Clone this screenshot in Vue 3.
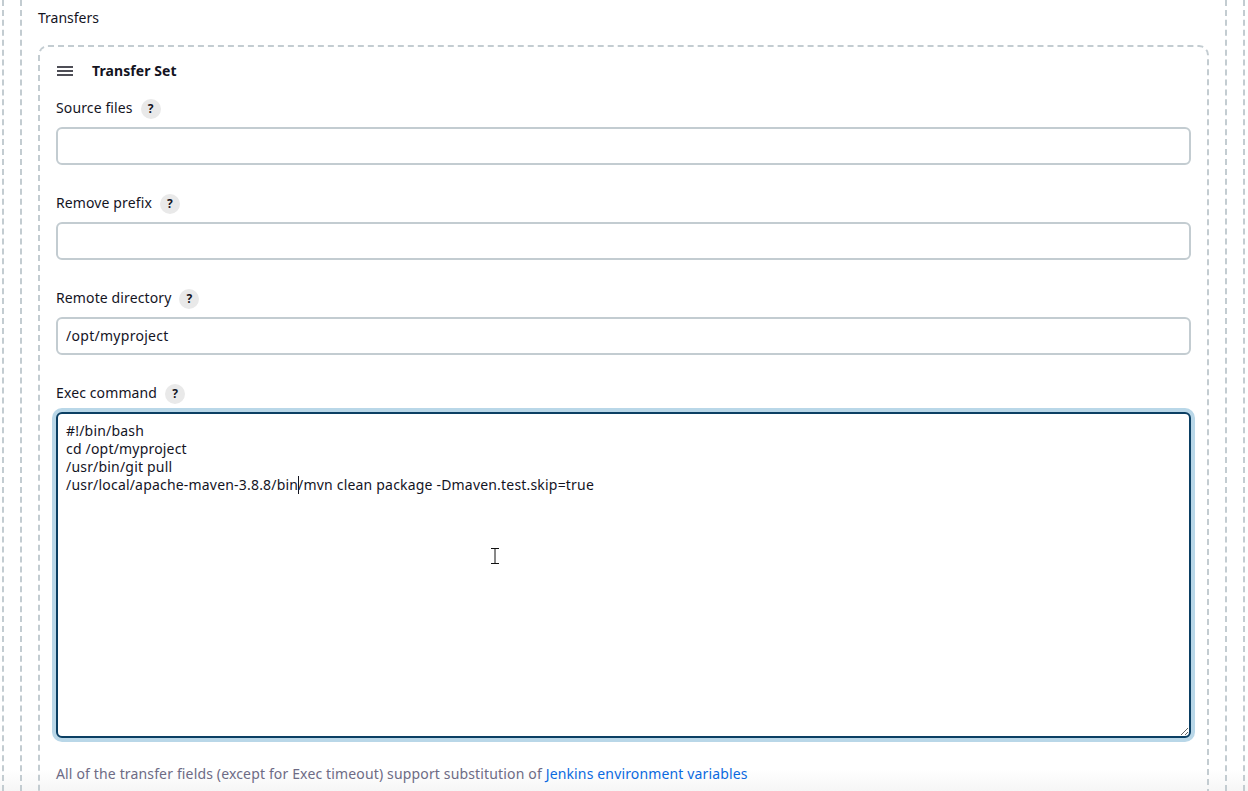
<script setup>
const command = `#!/bin/bash
cd /opt/myproject
/usr/bin/git pull
/usr/local/apache-maven-3.8.8/bin/mvn clean package -Dmaven.test.skip=true`
const fields = [
  { label: 'Source files', value: '' },
  { label: 'Remove prefix', value: '' },
  { label: 'Remote directory', value: '/opt/myproject' }
]
</script>

<template>
  <div class="page">
    <div class="rail rail-outer">
      <div class="rail rail-inner">
        <div class="section-label">Transfers</div>
        <div class="set">
          <div class="set-head">
            <svg class="handle" width="16" height="10" viewBox="0 0 16 10" aria-hidden="true">
              <path d="M0 1h16M0 5h16M0 9h16" stroke="#14141f" stroke-width="1.5" fill="none" />
            </svg>
            <span class="set-title">Transfer Set</span>
          </div>

          <div v-for="f in fields" :key="f.label" class="field">
            <div class="label-row">
              <span class="label">{{ f.label }}</span>
              <span class="help">?</span>
            </div>
            <input class="input" type="text" :value="f.value" />
          </div>

          <div class="field field-exec">
            <div class="label-row">
              <span class="label">Exec command</span>
              <span class="help">?</span>
            </div>
            <div class="editor">
              <textarea class="textarea" spellcheck="false" :value="command"></textarea>
              <span class="caret"></span>
              <svg class="ibeam" width="8" height="16" viewBox="0 0 8 16" aria-hidden="true">
                <path d="M0 .5h3M5 .5h3M3 .5h2M4 .5v15M0 15.5h8" stroke="#111" stroke-width="1" fill="none" />
              </svg>
            </div>
          </div>

          <p class="note">
            All of the transfer fields (except for Exec timeout) support substitution of
            <a class="link" href="#">Jenkins environment variables</a>
          </p>
        </div>
      </div>
    </div>
  </div>
</template>

<style>
html, body {
  margin: 0;
  height: 100%;
  overflow: hidden;
  background: #fff;
}
</style>

<style scoped>
.page {
  height: 791px;
  overflow: hidden;
  background: linear-gradient(to bottom, #fff 769px, #f6f6f6 791px);
  font-family: "Noto Sans", "Open Sans", sans-serif;
  font-size: 14px;
  color: #14141f;
}
.rail {
  border-left: 2px dashed #c3ccd1;
  border-right: 2px dashed #c3ccd1;
  box-sizing: border-box;
}
.rail-outer {
  margin: 0 3px 0 2px;
  padding: 0 16px;
  height: 791px;
}
.rail-inner {
  height: 791px;
  padding: 0 16px;
}
.section-label {
  height: 20px;
  padding-top: 8px;
  line-height: 20px;
  margin-bottom: 17px;
}
.set {
  border: 2px dashed #c3ccd1;
  border-bottom: none;
  border-radius: 10px 10px 0 0;
  padding: 0 16px;
  height: 760px;
  box-sizing: border-box;
}
.set-head {
  display: flex;
  align-items: center;
  height: 52px;
  box-sizing: border-box;
  padding: 0 0 4px 1px;
  gap: 19px;
}
.handle {
  flex: none;
}
.set-title {
  font-weight: 700;
  line-height: 20px;
  letter-spacing: 0.08px;
}
.field {
  margin-bottom: 29px;
}
.label-row {
  display: flex;
  align-items: center;
  height: 20px;
  margin-bottom: 8px;
}
.label {
  line-height: 18px;
  position: relative;
  top: -1px;
  letter-spacing: 0.12px;
}
.help {
  width: 20px;
  height: 20px;
  border-radius: 50%;
  margin-left: 8px;
  background: #e9e9e9;
  color: #14141f;
  font-size: 12px;
  font-weight: 700;
  line-height: 20px;
  text-align: center;
}
.input {
  display: block;
  width: 100%;
  height: 38px;
  box-sizing: border-box;
  border: 2px solid #c3ccd1;
  border-radius: 6px;
  padding: 0 8px 2px;
  background: #fff;
  font: inherit;
  letter-spacing: 0.28px;
  color: #14141f;
  outline: none;
}
.editor {
  position: relative;
  height: 326px;
}
.textarea {
  display: block;
  width: 100%;
  height: 326px;
  box-sizing: border-box;
  border: 2px solid #0b3f63;
  border-radius: 6px;
  padding: 8px;
  background: #fff;
  font: inherit;
  letter-spacing: 0.19px;
  line-height: 18px;
  color: #14141f;
  outline: none;
  box-shadow: 0 0 0 4px #b9d7e8;
  resize: vertical;
}
.caret {
  position: absolute;
  left: 242px;
  top: 64px;
  width: 1px;
  height: 18px;
  background: #14141f;
}
.ibeam {
  position: absolute;
  left: 435px;
  top: 136px;
}
.field-exec {
  margin-bottom: 26px;
}
.note {
  margin: 0;
  line-height: 20px;
  letter-spacing: 0.15px;
  color: #6d6b85;
}
.link {
  color: #0b6ae0;
  text-decoration: none;
}
</style>
